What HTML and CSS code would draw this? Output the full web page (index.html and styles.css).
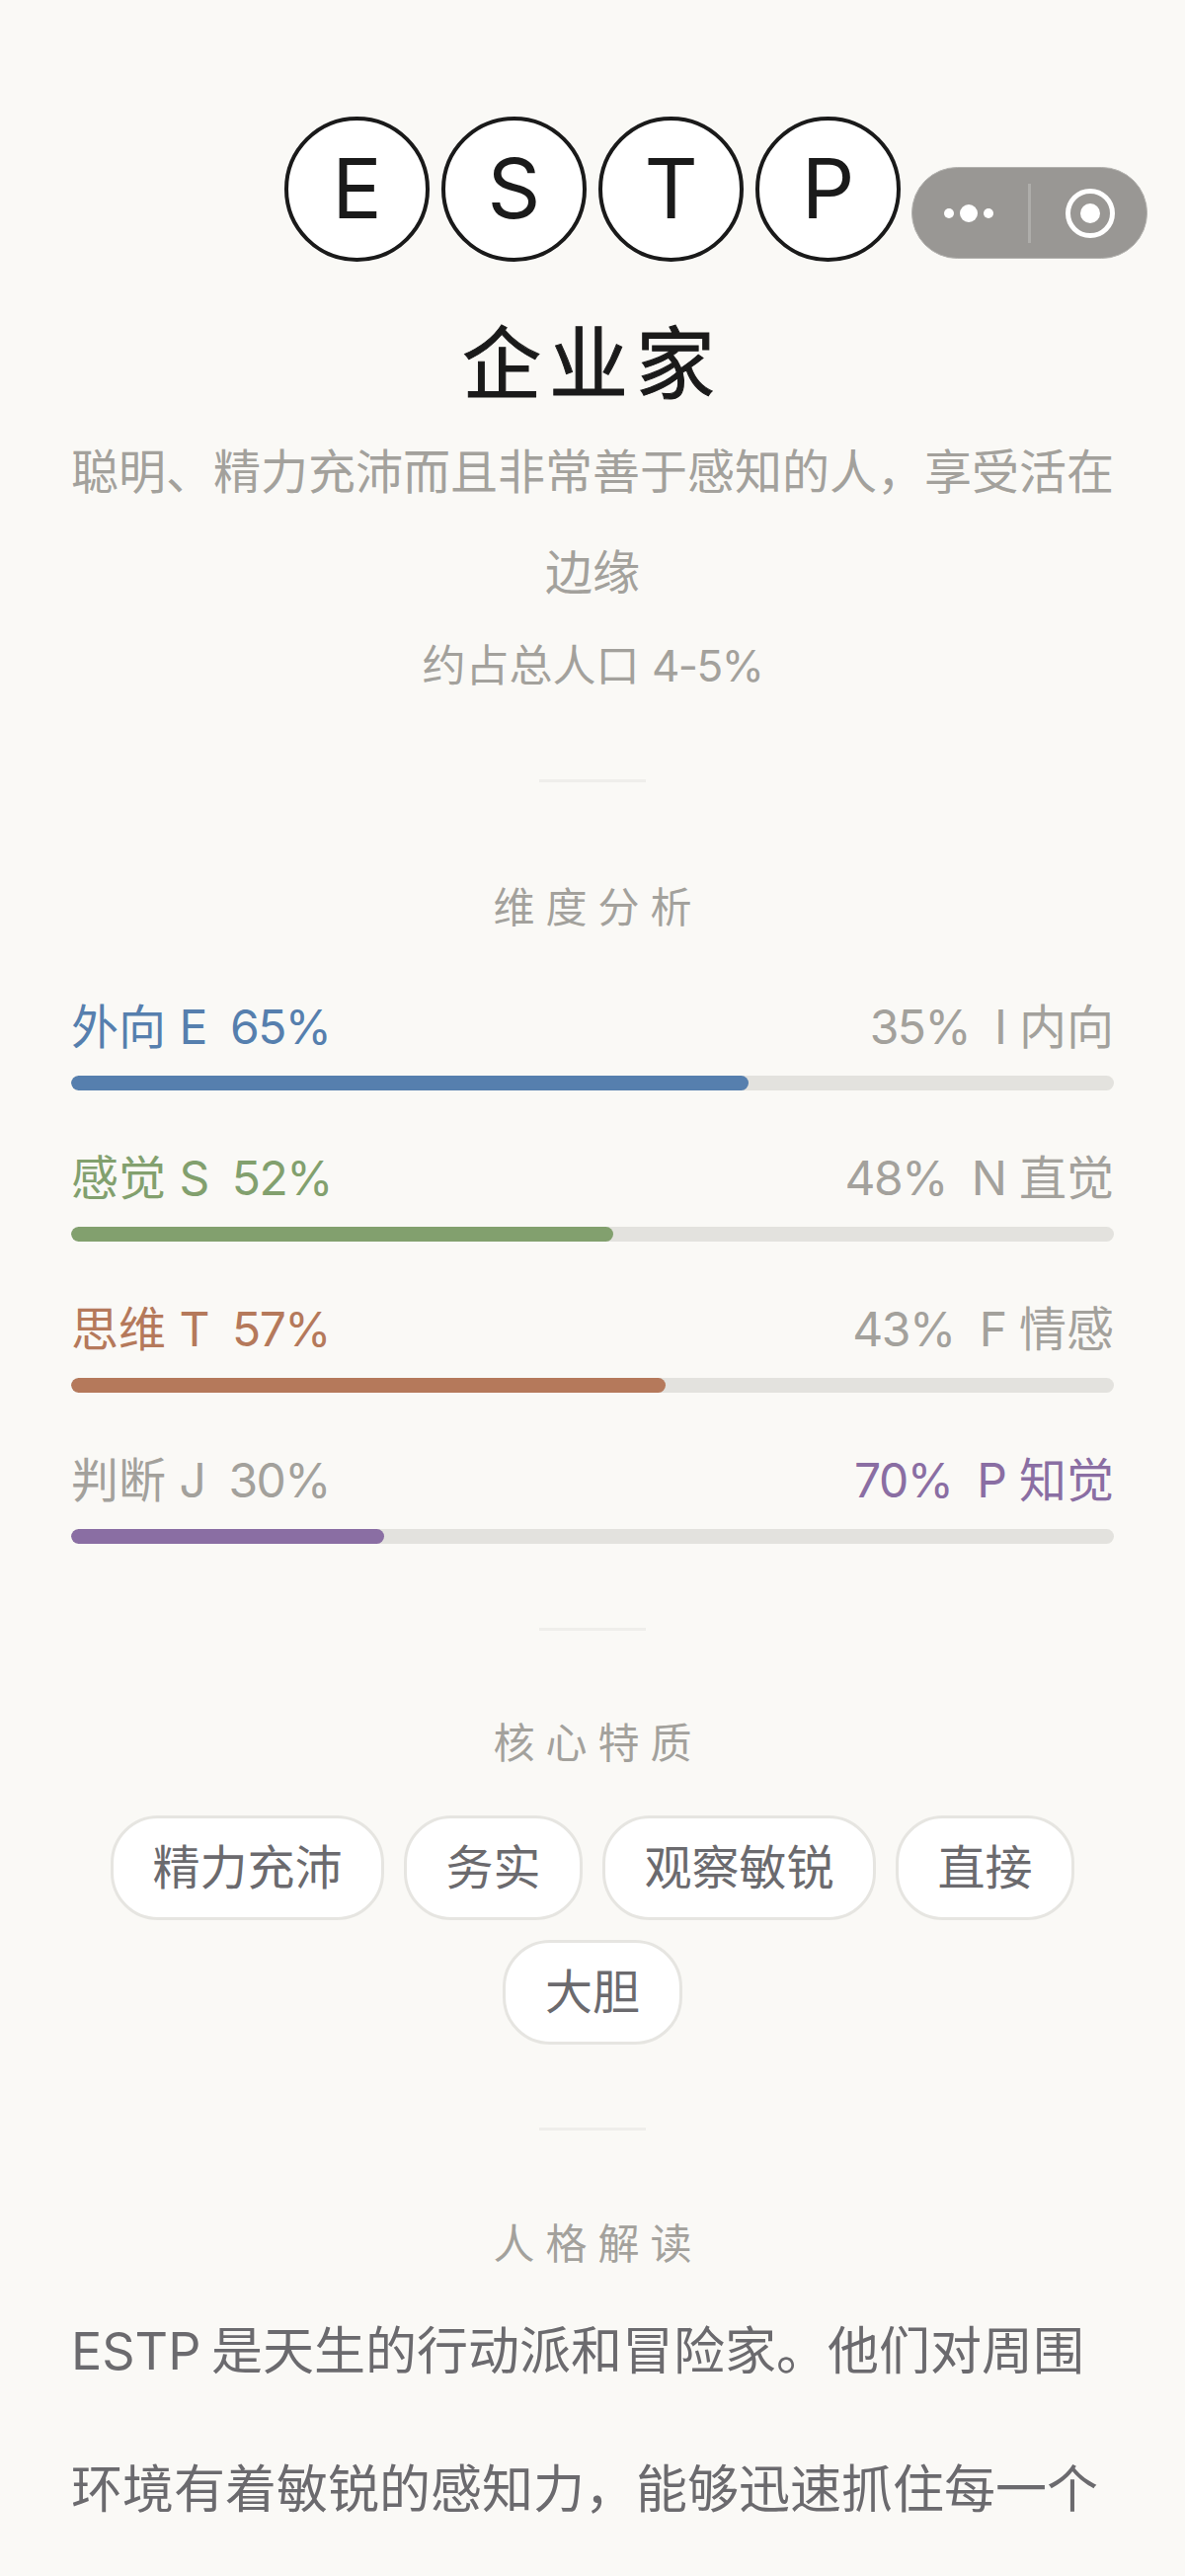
FILE: index.html
```html
<!DOCTYPE html>
<html lang="zh-CN">
<head>
  <meta charset="UTF-8" />
  <meta name="viewport" content="width=device-width, initial-scale=1.0"/>
  <title>ESTP 企业家</title>
  <link rel="stylesheet" href="styles.css">
</head>
<body>

  <div class="capsule">
    <svg class="capsule-more" width="72" height="24" viewBox="0 0 72 24">
      <circle cx="6" cy="12" r="5" fill="#fff"/>
      <circle cx="26" cy="12" r="9" fill="#fff"/>
      <circle cx="46" cy="12" r="5" fill="#fff"/>
    </svg>
    <span class="capsule-line"></span>
    <svg class="capsule-close" width="52" height="52" viewBox="0 0 52 52">
      <circle cx="26" cy="26" r="22.5" fill="none" stroke="#fff" stroke-width="5"/>
      <circle cx="26" cy="26" r="10" fill="#fff"/>
    </svg>
  </div>

  <div class="hero">
    <div class="letters">
      <div class="letter">E</div>
      <div class="letter">S</div>
      <div class="letter">T</div>
      <div class="letter">P</div>
    </div>
    <h1>企业家</h1>
    <p class="desc">聪明、精力充沛而且非常善于感知的人，享受活在边缘</p>
    <p class="ratio">约占总人口 <span class="en">4-5%</span></p>
  </div>

  <div class="divider"></div>

  <div class="section">
    <h3>维度分析</h3>

    <div class="dim">
      <div class="dim-labels">
        <div class="blue">外向 <span class="en">E</span><span class="en en-gap">65%</span></div>
        <div><span class="en">35%</span><span class="en en-gap-right">I</span> 内向</div>
      </div>
      <div class="track"><div class="fill bg-blue" style="width: 65%"></div></div>
    </div>

    <div class="dim">
      <div class="dim-labels">
        <div class="green">感觉 <span class="en">S</span><span class="en en-gap">52%</span></div>
        <div><span class="en">48%</span><span class="en en-gap-right">N</span> 直觉</div>
      </div>
      <div class="track"><div class="fill bg-green" style="width: 52%"></div></div>
    </div>

    <div class="dim">
      <div class="dim-labels">
        <div class="orange">思维 <span class="en">T</span><span class="en en-gap">57%</span></div>
        <div><span class="en">43%</span><span class="en en-gap-right">F</span> 情感</div>
      </div>
      <div class="track"><div class="fill bg-orange" style="width: 57%"></div></div>
    </div>

    <div class="dim">
      <div class="dim-labels">
        <div>判断 <span class="en">J</span><span class="en en-gap">30%</span></div>
        <div class="purple"><span class="en">70%</span><span class="en en-gap-right">P</span> 知觉</div>
      </div>
      <div class="track"><div class="fill bg-purple" style="width: 30%"></div></div>
    </div>
  </div>

  <div class="divider divider-traits"></div>

  <div class="section section-traits">
    <h3>核心特质</h3>
    <div class="tags">
      <span class="tag">精力充沛</span>
      <span class="tag">务实</span>
      <span class="tag">观察敏锐</span>
      <span class="tag">直接</span>
      <span class="tag">大胆</span>
    </div>
  </div>

  <div class="divider divider-read"></div>

  <div class="section section-read">
    <h3>人格解读</h3>
    <p class="read">ESTP 是天生的行动派和冒险家。他们对周围环境有着敏锐的感知力，能够迅速抓住每一个</p>
  </div>

</body>
</html>
```

FILE: styles.css
```css
html, body {
  height: 2608px;
  overflow: hidden;
}
body {
  margin: 0;
  padding: 118px 72px 0;
  box-sizing: border-box;
  position: relative;
  font-family: Inter, "Noto Sans CJK SC", sans-serif;
  font-weight: 400;
  background-color: #faf9f6;
  color: #a3a19c;
}
h1, h3, p {
  margin: 0;
  font-weight: 400;
}
.en {
  letter-spacing: -1.5px;
}
.en-gap {
  margin-left: 24px;
}
.en-gap-right {
  margin-left: 25px;
}
.capsule {
  position: absolute;
  top: 169px;
  left: 923px;
  width: 239px;
  height: 93px;
  box-sizing: border-box;
  border: 1px solid #b3b2af;
  border-radius: 47px;
  background: #999794;
}
.capsule-more {
  position: absolute;
  top: 34px;
  left: 31px;
}
.capsule-line {
  position: absolute;
  top: 16px;
  left: 117px;
  width: 3px;
  height: 60px;
  background: #aeadaa;
}
.capsule-close {
  position: absolute;
  top: 20px;
  left: 154px;
}
.hero {
  text-align: center;
}
.letters {
  display: flex;
  justify-content: center;
  gap: 12px;
}
.letter {
  width: 147px;
  height: 147px;
  box-sizing: border-box;
  border: 4px solid #1a1a1a;
  border-radius: 50%;
  background: #fff;
  color: #1a1a1a;
  font-size: 84px;
  line-height: 137px;
  text-align: center;
}
h1 {
  margin-top: 47px;
  font-size: 80px;
  line-height: 112px;
  letter-spacing: 8px;
  color: #1a1a1a;
  -webkit-text-stroke: 1px #1a1a1a;
}
.desc {
  margin-top: 3px;
  font-size: 48px;
  line-height: 102px;
}
.ratio {
  margin-top: 1px;
  font-size: 44px;
  line-height: 84px;
}
.divider {
  width: 108px;
  height: 3px;
  margin: 73px auto 0;
  background: #efeeeb;
}
.section {
  margin-top: 97px;
}
h3 {
  padding-left: 11px;
  font-size: 42px;
  line-height: 60px;
  letter-spacing: 11px;
  text-align: center;
}
.dim {
  margin-top: 56px;
}
.section .dim:nth-child(2) {
  margin-top: 58px;
}
.dim-labels {
  display: flex;
  justify-content: space-between;
  font-size: 48px;
  line-height: 66px;
}
.blue { color: #567fae; }
.green { color: #82a06e; }
.orange { color: #b5795b; }
.purple { color: #8a6ea3; }
.track {
  height: 15px;
  margin-top: 16px;
  border-radius: 8px;
  background: #e3e2de;
  overflow: hidden;
}
.fill {
  height: 100%;
  border-radius: 8px;
}
.bg-blue { background: #567fae; }
.bg-green { background: #82a06e; }
.bg-orange { background: #b5795b; }
.bg-purple { background: #8a6ea3; }
.divider-traits {
  margin-top: 85px;
}
.section-traits {
  margin-top: 84px;
}
.tags {
  display: flex;
  flex-wrap: wrap;
  justify-content: center;
  gap: 20px;
  margin-top: 43px;
}
.tag {
  box-sizing: border-box;
  height: 106px;
  padding: 0 39.5px;
  border: 3px solid #e6e5e1;
  border-radius: 48px;
  background: #fff;
  color: #6b6a6e;
  font-size: 48px;
  line-height: 100px;
}
.divider-read {
  margin-top: 84px;
}
.section-read {
  margin-top: 85px;
}
.read {
  margin-top: 9px;
  font-size: 52px;
  line-height: 140px;
  word-spacing: -4px;
  color: #6b6a6e;
}
```
